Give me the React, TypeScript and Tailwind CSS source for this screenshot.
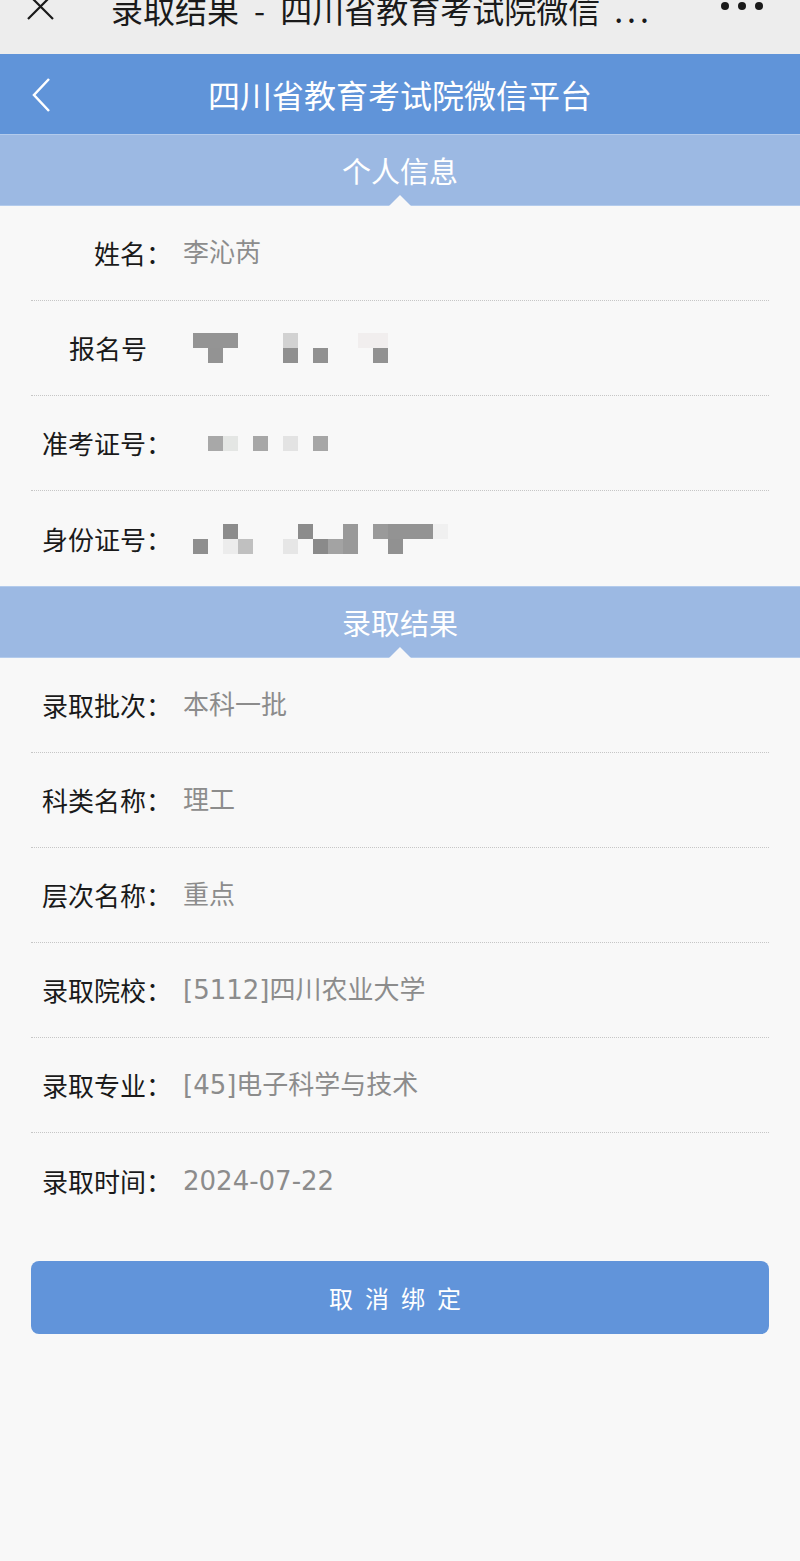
import React from "react";

const FONT = '"Noto Sans CJK SC", "Noto Sans", sans-serif';
const VALUE_FONT = '"DejaVu Sans", "Noto Sans CJK SC", sans-serif';

type Cell = [number, number, number, number, string];

function Mosaic({ w, h, cells }: { w: number; h: number; cells: Cell[] }) {
  return (
    <svg width={w} height={h} viewBox={`0 0 ${w} ${h}`} className="block">
      {cells.map(([x, y, cw, ch, c], i) => (
        <rect key={i} x={x} y={y} width={cw} height={ch} fill={c} />
      ))}
    </svg>
  );
}

const mosaicBmh: Cell[] = [
  [10, 0, 45, 15, "#949494"],
  [25, 15, 15, 15, "#939393"],
  [100, 0, 15, 15, "#d2d2d2"],
  [100, 15, 15, 15, "#909090"],
  [130, 15, 15, 15, "#919191"],
  [175, 0, 30, 15, "#f1eeee"],
  [190, 15, 15, 15, "#929292"],
];

const mosaicZkz: Cell[] = [
  [25, 0, 15, 15, "#a8a8a8"],
  [40, 0, 15, 15, "#e4e6e4"],
  [70, 0, 15, 15, "#a7a7a7"],
  [100, 0, 15, 15, "#e3e3e3"],
  [130, 0, 15, 15, "#a6a6a6"],
];

const mosaicSfz: Cell[] = [
  [10, 15, 15, 15, "#8f8f8f"],
  [40, 0, 15, 15, "#8c8c8c"],
  [40, 15, 15, 15, "#ececec"],
  [55, 15, 15, 15, "#c0c0c0"],
  [100, 15, 15, 15, "#e6e6e6"],
  [115, 0, 15, 15, "#8c8c8c"],
  [130, 15, 15, 15, "#8a8a8a"],
  [145, 15, 15, 15, "#a3a3a3"],
  [160, 0, 15, 30, "#999999"],
  [190, 0, 15, 15, "#9a9a9a"],
  [205, 0, 45, 15, "#939393"],
  [205, 15, 15, 15, "#919191"],
  [250, 0, 15, 15, "#f0f0f0"],
];

function SectionHeader({ title }: { title: string }) {
  return (
    <div className="relative flex h-[72px] items-center justify-center border-y border-[#b3cbec] bg-[#9cb9e3]">
      <span className="text-[29px] leading-none text-white">{title}</span>
      <div className="absolute bottom-[-1px] left-1/2 h-0 w-0 -translate-x-1/2 border-x-[11px] border-b-[11px] border-x-transparent border-b-[#f8f8f8]" />
    </div>
  );
}

function Row({
  label,
  value,
  last,
  labelPad,
}: {
  label: string;
  value: React.ReactNode;
  last?: boolean;
  labelPad?: boolean;
}) {
  return (
    <div
      className={`flex h-[95px] items-center ${
        last ? "" : "border-b border-dotted border-[#c6c6c6]"
      }`}
    >
      <div
        className={`w-[141px] shrink-0 text-right text-[26px] leading-none text-[#1a1a1a] ${
          labelPad ? "pr-[25px]" : ""
        }`}
      >
        {label}
      </div>
      <div
        className="ml-[11px] flex items-center text-[26px] leading-none text-[#8c8c8c]"
        style={{ fontFamily: VALUE_FONT }}
      >
        {value}
      </div>
    </div>
  );
}

export default function App() {
  return (
    <div
      className="min-h-[1561px] w-full bg-[#f8f8f8]"
      style={{ fontFamily: FONT }}
    >
      {/* top browser bar */}
      <div className="relative flex h-[54px] items-start overflow-hidden bg-[#ededed]">
        <svg
          width="30"
          height="22"
          viewBox="0 0 30 22"
          className="absolute left-[26px] top-0"
        >
          <path d="M2 -6 L27 19 M27 -6 L2 19" stroke="#1a1a1a" strokeWidth="2.2" fill="none" />
        </svg>
        <div className="ml-[111px] mt-[-7px] flex text-[32px] leading-none text-[#1a1a1a]">
          <span>录取结果</span>
          <span className="mx-[15px]">-</span>
          <span>四川省教育考试院微信</span>
          <span className="ml-[14px] tracking-[4px]">...</span>
        </div>
        <div className="absolute right-[37px] top-[2px] flex gap-[9px]">
          <span className="block h-[8px] w-[8px] rounded-full bg-[#1a1a1a]" />
          <span className="block h-[8px] w-[8px] rounded-full bg-[#1a1a1a]" />
          <span className="block h-[8px] w-[8px] rounded-full bg-[#1a1a1a]" />
        </div>
      </div>

      {/* blue header */}
      <div className="relative flex h-[80px] items-center justify-center bg-[#6094d9]">
        <svg
          width="22"
          height="36"
          viewBox="0 0 22 36"
          className="absolute left-[31px] top-[23px]"
        >
          <polyline points="18,2 3,18 18,34" stroke="#ffffff" strokeWidth="2.5" fill="none" />
        </svg>
        <span className="text-[32px] leading-none text-white">
          四川省教育考试院微信平台
        </span>
      </div>

      <SectionHeader title="个人信息" />
      <div className="px-[31px]">
        <Row label="姓名：" value="李沁芮" />
        <Row
          label="报名号"
          labelPad
          value={<Mosaic w={270} h={30} cells={mosaicBmh} />}
        />
        <Row
          label="准考证号："
          value={<Mosaic w={270} h={15} cells={mosaicZkz} />}
        />
        <Row
          label="身份证号："
          last
          value={<Mosaic w={280} h={30} cells={mosaicSfz} />}
        />
      </div>

      <SectionHeader title="录取结果" />
      <div className="px-[31px]">
        <Row label="录取批次：" value="本科一批" />
        <Row label="科类名称：" value="理工" />
        <Row label="层次名称：" value="重点" />
        <Row label="录取院校：" value="[5112]四川农业大学" />
        <Row label="录取专业：" value="[45]电子科学与技术" />
        <Row label="录取时间：" value="2024-07-22" last />
      </div>

      <div className="px-[31px] pt-[33px]">
        <button className="flex h-[73px] w-full items-center justify-center rounded-[8px] bg-[#6194da] text-[24px] tracking-[12px] text-white">
          <span className="pl-[2px]">取消绑定</span>
        </button>
      </div>
    </div>
  );
}
